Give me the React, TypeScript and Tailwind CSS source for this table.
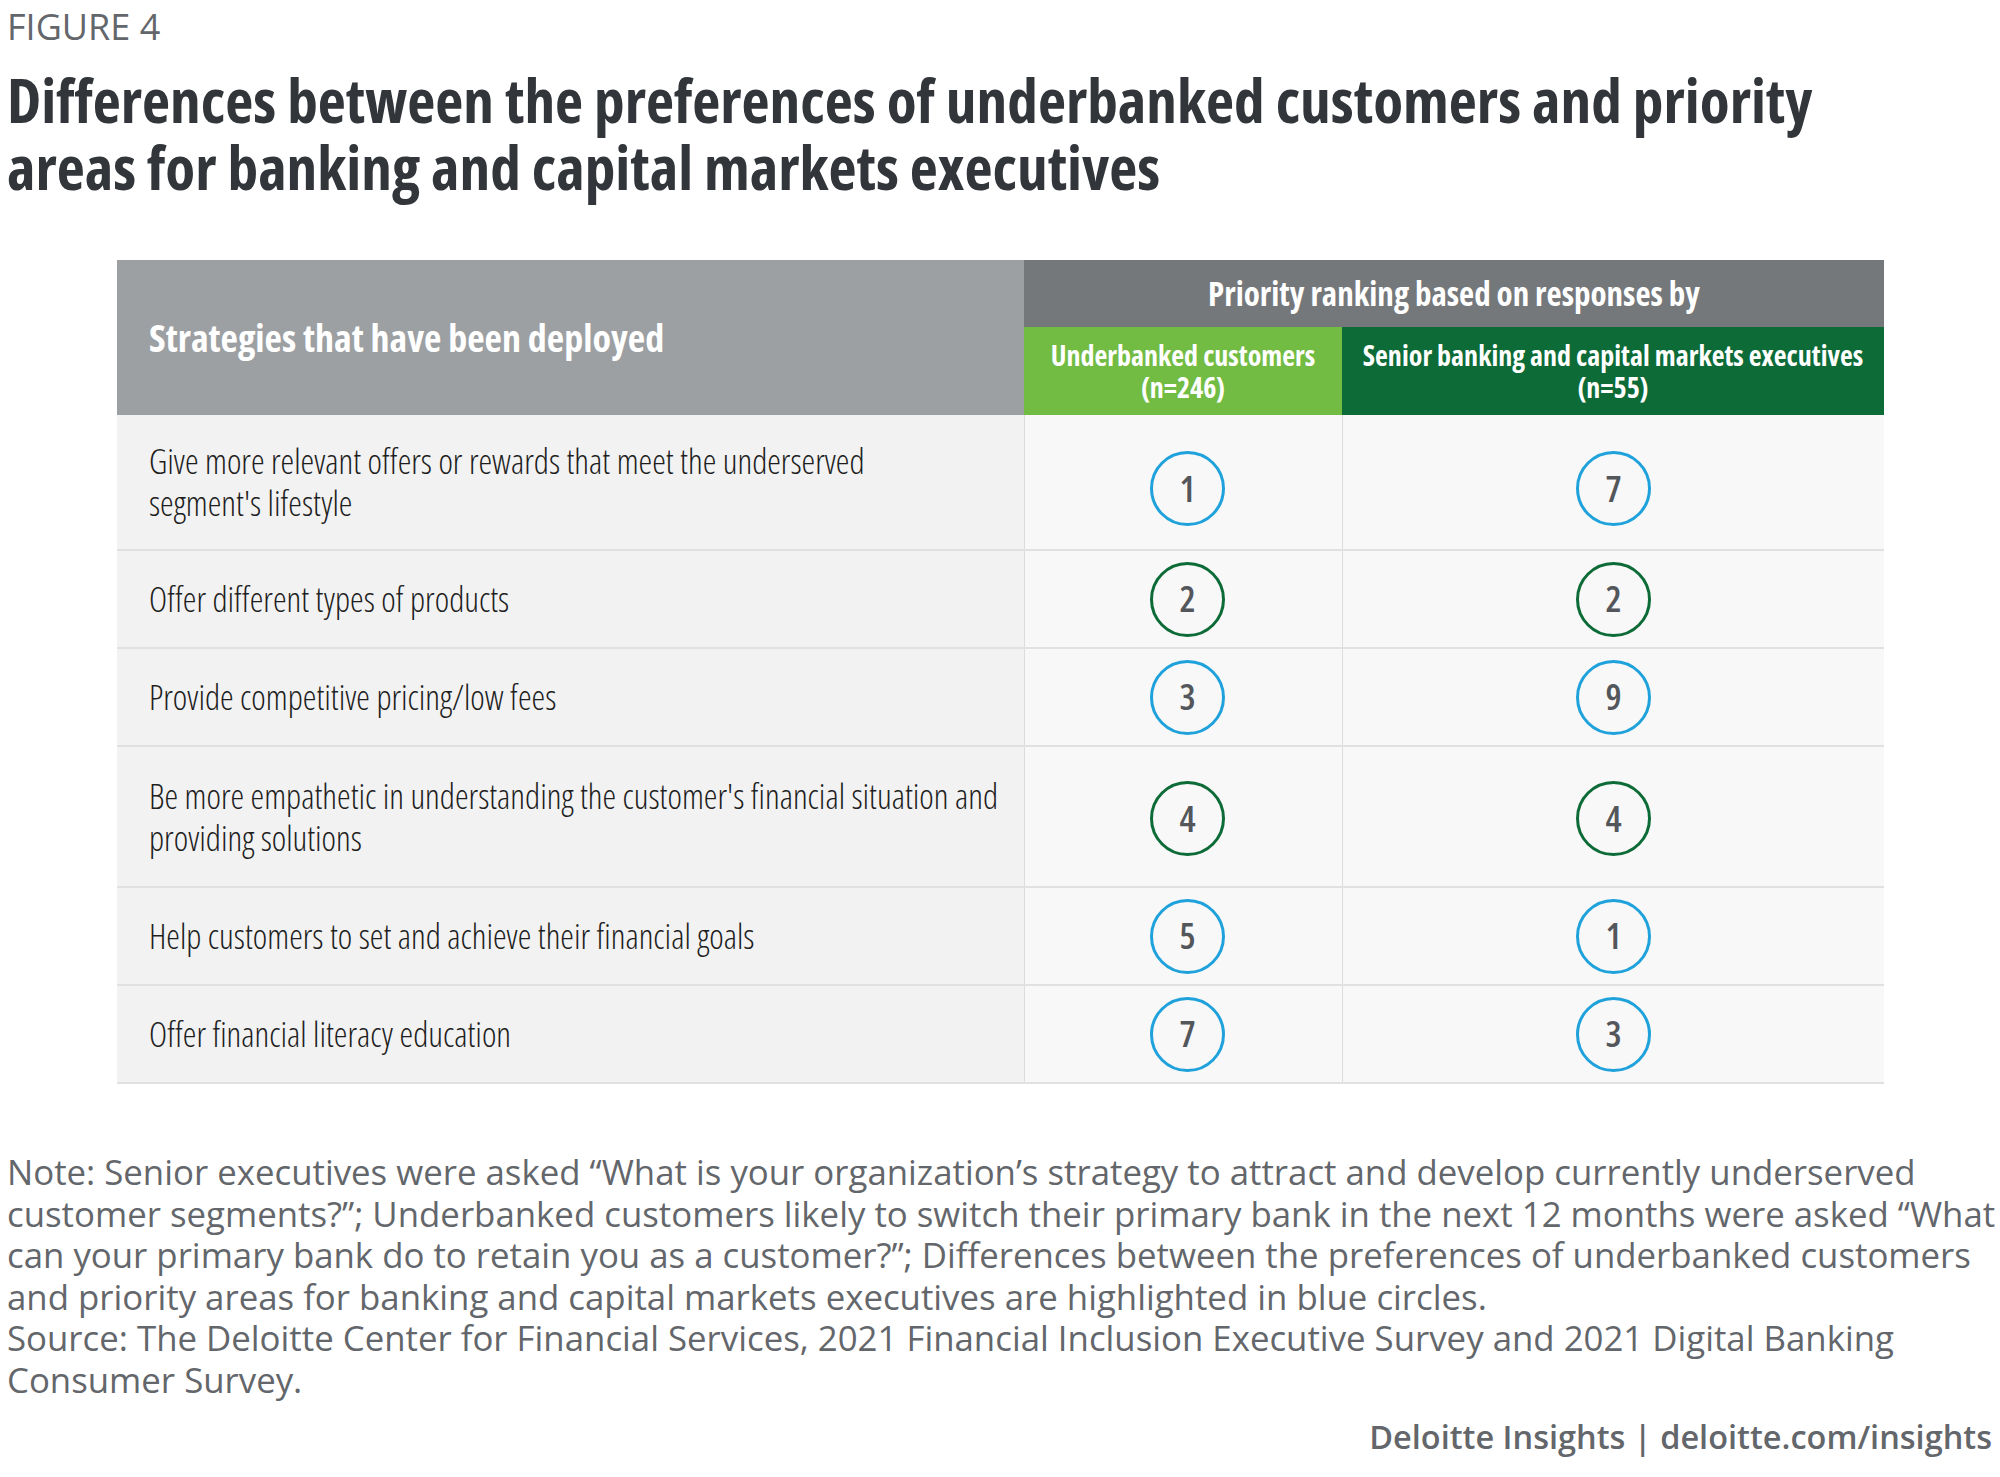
const rows = [
  { lines: ['Give more relevant offers or rewards that meet the underserved', "segment's lifestyle"], a: 1, b: 7, hi: true, h: 'h-[136px]', nudge: 'pt-[13px]' },
  { lines: ['Offer different types of products'], a: 2, b: 2, hi: false, h: 'h-[98px]', nudge: '' },
  { lines: ['Provide competitive pricing/low fees'], a: 3, b: 9, hi: true, h: 'h-[98px]', nudge: '' },
  { lines: ["Be more empathetic in understanding the customer's financial situation and", 'providing solutions'], a: 4, b: 4, hi: false, h: 'h-[141px]', nudge: 'pt-[4px]' },
  { lines: ['Help customers to set and achieve their financial goals'], a: 5, b: 1, hi: true, h: 'h-[98px]', nudge: '' },
  { lines: ['Offer financial literacy education'], a: 7, b: 3, hi: true, h: 'h-[98px]', nudge: '' },
];

const note = [
  'Note: Senior executives were asked “What is your organization’s strategy to attract and develop currently underserved',
  'customer segments?”; Underbanked customers likely to switch their primary bank in the next 12 months were asked “What',
  'can your primary bank do to retain you as a customer?”; Differences between the preferences of underbanked customers',
  'and priority areas for banking and capital markets executives are highlighted in blue circles.',
  'Source: The Deloitte Center for Financial Services, 2021 Financial Inclusion Executive Survey and 2021 Digital Banking',
  'Consumer Survey.',
];

function Rank({ value, highlight }: { value: number; highlight: boolean }) {
  return (
    <div
      className={
        'flex h-[75px] w-[75px] items-center justify-center rounded-full border-[3.5px] text-[36px] font-semibold leading-none text-[#53565a] [font-stretch:75%] ' +
        (highlight ? 'border-[#1fa2db]' : 'border-[#0d6b37]')
      }
    >
      {value}
    </div>
  );
}

export default function App() {
  return (
    <div className="w-[2000px] bg-white pl-[7px] pt-[5px] font-['Open_Sans',sans-serif]">
      <div className="text-[36px] leading-[44px] text-[#63666a]">FIGURE 4</div>
      <h1 className="mt-[17px] text-[61.3px] font-bold leading-[67px] text-[#32353a] [font-stretch:75%]">
        Differences between the preferences of underbanked customers and priority
        <br />
        areas for banking and capital markets executives
      </h1>

      <div className="ml-[110px] mt-[60px] w-[1767px] [font-stretch:75%]">
        {/* header */}
        <div className="grid grid-cols-[907px_318px_542px]">
          <div className="row-span-2 flex items-center bg-[#9da0a3] pl-[32px] text-[38px] font-bold text-white">
            Strategies that have been deployed
          </div>
          <div className="col-span-2 flex h-[67px] items-center justify-center bg-[#75787b] text-[33px] font-bold text-white">
            Priority ranking based on responses by
          </div>
          <div className="flex h-[88px] flex-col items-center justify-center bg-[#72bc44] text-center text-[28px] font-bold leading-[32px] text-white">
            <span>Underbanked customers</span>
            <span>(n=246)</span>
          </div>
          <div className="flex h-[88px] flex-col items-center justify-center bg-[#0d6b37] text-center text-[28px] font-bold leading-[32px] text-white">
            <span>Senior banking and capital markets executives</span>
            <span>(n=55)</span>
          </div>
        </div>

        {/* body */}
        {rows.map((r, i) => (
          <div key={i} className={'grid grid-cols-[907px_318px_542px] border-b-2 border-[#e1e1e1] ' + r.h}>
            <div className="flex flex-col justify-center whitespace-nowrap bg-[#f2f2f2] pl-[32px] text-[34.5px] font-light leading-[42px] text-[#1e1e1e]">
              {r.lines.map((l, j) => (
                <span key={j}>{l}</span>
              ))}
            </div>
            <div className={'flex items-center justify-center border-l border-[#dcdcdc] bg-[#f8f8f8] pl-[8px] ' + r.nudge}>
              <Rank value={r.a} highlight={r.hi} />
            </div>
            <div className={'flex items-center justify-center border-l border-[#dcdcdc] bg-[#f8f8f8] ' + r.nudge}>
              <Rank value={r.b} highlight={r.hi} />
            </div>
          </div>
        ))}
      </div>

      <div className="mt-[67px] whitespace-nowrap text-[34.8px] leading-[41.6px] text-[#63666a]">
        {note.map((l, i) => (
          <div key={i}>{l}</div>
        ))}
      </div>

      <div className="mt-[15px] pb-[16px] pr-[8px] text-right text-[32.5px] font-semibold leading-[42px] text-[#63666a]">
        Deloitte Insights | deloitte.com/insights
      </div>
    </div>
  );
}
